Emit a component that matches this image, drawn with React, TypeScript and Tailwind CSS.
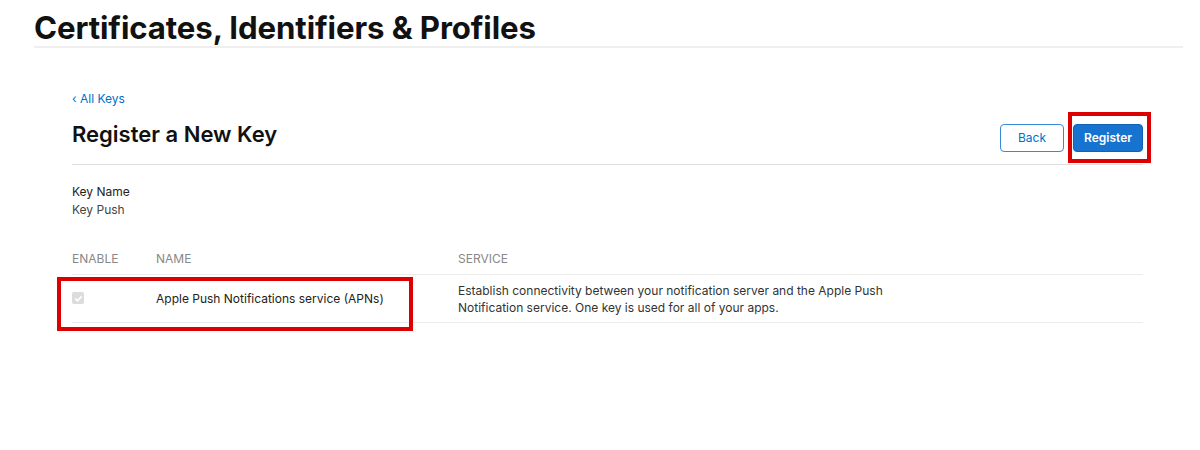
import React from "react";

export default function App() {
  return (
    <div className="w-[1200px] h-[450px] bg-white overflow-hidden relative" style={{ fontFamily: "Inter, 'Noto Sans', sans-serif" }}>
      <div className="pl-[34px] pr-[17px]">
        <h1 className="text-[31.2px] font-bold leading-none pt-[13px] pb-[2px] text-[#111] tracking-[-0.1px] border-b-2 border-[#efefef]">
          Certificates, Identifiers &amp; Profiles
        </h1>
      </div>
      <div className="pl-[72px] pr-[57px] pt-[43px]">
        <div className="text-[12px] leading-[16px] text-[#0070c9]">‹ All Keys</div>
        <div className="flex items-start justify-between pt-[12px] pb-[12px] border-b border-[#dedede]">
          <h2 className="text-[22px] font-semibold text-[#111] leading-[30px]">Register a New Key</h2>
          <div className="flex items-center gap-[9px] mt-[5px]">
            <button className="h-[28px] w-[64px] rounded-[4px] border border-[#3b8ad6] text-[12px] text-[#0070c9] bg-white">Back</button>
            <div className="relative">
              <button className="h-[28px] w-[70px] rounded-[4px] bg-[#1673cf] border border-[#0e63b8] text-[12px] font-semibold text-white">Register</button>
              <div className="absolute left-[-5px] top-[-12px] w-[83px] h-[51px] border-[4px] border-[#dd0000] pointer-events-none" />
            </div>
          </div>
        </div>
        <div className="pt-[18px] text-[12px] leading-[18px]">
          <div className="text-[#222]">Key Name</div>
          <div className="text-[#444]">Key Push</div>
        </div>
        <div className="mt-[32px]">
          <div className="grid grid-cols-[84px_302px_1fr] text-[12px] text-[#888] leading-[16px] pb-[7px] border-b border-[#ececec]">
            <div>ENABLE</div>
            <div>NAME</div>
            <div>SERVICE</div>
          </div>
          <div className="relative grid grid-cols-[84px_302px_1fr] border-b border-[#ececec] pt-[7px] pb-[6px] text-[12px] leading-[17px] text-[#333]">
            <div className="pt-[10px]">
              <div className="w-[12px] h-[12px] rounded-[2px] bg-[#dcdcdc] flex items-center justify-center">
                <svg width="9" height="9" viewBox="0 0 10 10"><path d="M1.5 5.2 L4 7.6 L8.5 2.4" fill="none" stroke="#fff" strokeWidth="1.8" /></svg>
              </div>
            </div>
            <div className="pt-[8px] text-[#222]">Apple Push Notifications service (APNs)</div>
            <div className="w-[440px]">Establish connectivity between your notification server and the Apple Push Notification service. One key is used for all of your apps.</div>
            <div className="absolute left-[-15px] top-[2px] w-[356px] h-[54px] border-[4px] border-[#dd0000] pointer-events-none" />
          </div>
        </div>
      </div>
    </div>
  );
}
